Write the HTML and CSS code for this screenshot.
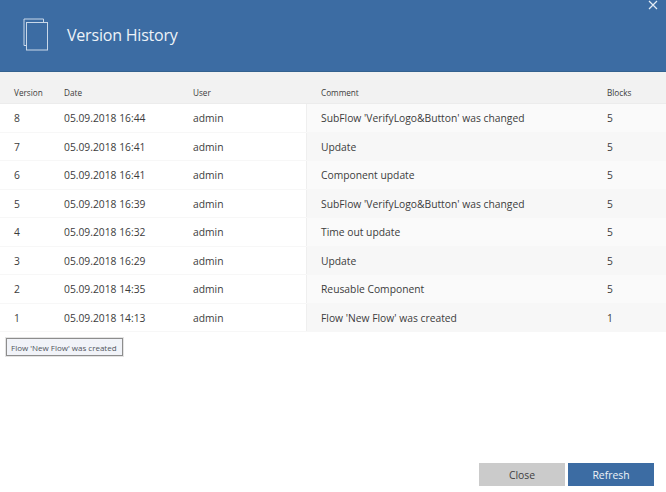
FILE: index.html
```html
<!DOCTYPE html>
<html lang="en">
<head>
<meta charset="utf-8">
<title>Version History</title>
<link rel="stylesheet" href="styles.css">
</head>
<body>
<div class="dialog">
  <header class="banner">
    <svg class="banner-icon" width="26" height="33" viewBox="0 0 26 33" fill="none" stroke="#c9d8e9" stroke-width="1">
      <path d="M3.5 27.5H1V1H20.5V4"/>
      <rect x="3.5" y="4.5" width="21" height="27.5"/>
    </svg>
    <h1 class="banner-title">Version History</h1>
    <svg class="close-x" width="10" height="10" viewBox="0 0 10 10" stroke="#e4edf6" stroke-width="1.2"><path d="M1 1L9 9M9 1L1 9"/></svg>
  </header>
  <div class="table">
    <div class="row head">
      <div class="c-ver">Version</div><div class="c-date">Date</div><div class="c-user">User</div><div class="c-com">Comment</div><div class="c-blk">Blocks</div>
    </div>
    <div class="row"><div class="c-ver">8</div><div class="c-date">05.09.2018 16:44</div><div class="c-user">admin</div><div class="c-com">SubFlow 'VerifyLogo&amp;Button' was changed</div><div class="c-blk">5</div></div>
    <div class="row"><div class="c-ver">7</div><div class="c-date">05.09.2018 16:41</div><div class="c-user">admin</div><div class="c-com">Update</div><div class="c-blk">5</div></div>
    <div class="row"><div class="c-ver">6</div><div class="c-date">05.09.2018 16:41</div><div class="c-user">admin</div><div class="c-com">Component update</div><div class="c-blk">5</div></div>
    <div class="row"><div class="c-ver">5</div><div class="c-date">05.09.2018 16:39</div><div class="c-user">admin</div><div class="c-com">SubFlow 'VerifyLogo&amp;Button' was changed</div><div class="c-blk">5</div></div>
    <div class="row"><div class="c-ver">4</div><div class="c-date">05.09.2018 16:32</div><div class="c-user">admin</div><div class="c-com">Time out update</div><div class="c-blk">5</div></div>
    <div class="row"><div class="c-ver">3</div><div class="c-date">05.09.2018 16:29</div><div class="c-user">admin</div><div class="c-com">Update</div><div class="c-blk">5</div></div>
    <div class="row"><div class="c-ver">2</div><div class="c-date">05.09.2018 14:35</div><div class="c-user">admin</div><div class="c-com">Reusable Component</div><div class="c-blk">5</div></div>
    <div class="row"><div class="c-ver">1</div><div class="c-date">05.09.2018 14:13</div><div class="c-user">admin</div><div class="c-com">Flow 'New Flow' was created</div><div class="c-blk">1</div></div>
  </div>
  <div class="tip">Flow 'New Flow' was created</div>
  <div class="spacer"></div>
  <footer class="actions">
    <button class="btn btn-close">Close</button>
    <button class="btn btn-refresh">Refresh</button>
  </footer>
</div>
</body>
</html>
```
FILE: styles.css
```css
* { box-sizing: border-box; }
html, body { margin: 0; padding: 0; height: 100%; background: #fff; overflow: hidden; }
body { font-family: "Open Sans", "Noto Sans", sans-serif; color: #3c3c3c; }
.dialog { height: 492px; display: flex; flex-direction: column; }
.banner { position: relative; height: 72px; flex: none; background: #3c6ca3; display: flex; align-items: center; padding: 0 0 1px 23px; border-bottom: 1px solid #34628f; }
.banner-icon { display: block; margin-top: -1px; }
.banner-title { margin: 0 0 0 18px; font-size: 16px; font-weight: 400; color: #eef3f8; letter-spacing: -0.2px; }
.close-x { position: absolute; top: 0; right: 8px; }
.table { flex: none; }
.row { display: grid; grid-template-columns: 64px 129px 113px 1fr 59px; height: 28.5px; font-size: 10.3px; align-items: stretch; border-bottom: 1px solid #f7f7f7; }
.row > div { display: flex; align-items: center; white-space: nowrap; padding-top: 1px; }
.row.head > div { padding-top: 10px; }
.head { height: 32px; background: #f2f2f2; font-size: 8.2px; border-bottom: 1px solid #ececec; }
.row > .c-ver { padding-left: 14px; }
.row > .c-com { padding-left: 14px; }
.row.head > .c-com { padding-left: 15px; }
.row:not(.head) .c-com, .row:not(.head) .c-blk { background: #fafafa; }
.row:nth-child(odd):not(.head) .c-com, .row:nth-child(odd):not(.head) .c-blk { background: #f7f7f7; }
.row:not(.head) .c-com { border-left: 1px solid #efefef; }
.tip { align-self: flex-start; margin: 6px 0 0 6px; height: 18px; padding: 0 5px 0 4px; display: flex; align-items: center; font-size: 8px; color: #50545c; background: #f1f3f8; border: 1px solid #8d8d8d; box-shadow: 0 0 0 1px #e4e4e4; }
.spacer { flex: 1; }
.actions { display: flex; justify-content: flex-end; gap: 3px; padding: 0 12px 6px 0; }
.btn { width: 86px; height: 23px; border: 0; padding: 0; font-family: inherit; font-size: 10.4px; }
.btn-close { background: #cbcbcb; color: #3f3f3f; }
.btn-refresh { background: #3c6ca3; color: #eef3f8; }
```
